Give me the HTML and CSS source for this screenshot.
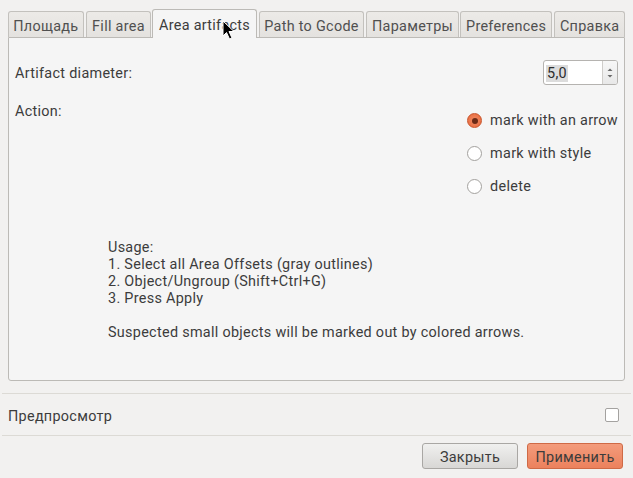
FILE: index.html
```html
<!DOCTYPE html>
<html>
<head>
<meta charset="utf-8">
<link rel="stylesheet" href="styles.css">
</head>
<body>
<div class="dialog">
  <div class="tabs">
    <div class="tab t1">Площадь</div>
    <div class="tab t2">Fill area</div>
    <div class="tab t3 active">Area artifacts</div>
    <div class="tab t4">Path to Gcode</div>
    <div class="tab t5">Параметры</div>
    <div class="tab t6">Preferences</div>
    <div class="tab t7">Справка</div>
  </div>
  <div class="panel">
    <div class="row-diam">
      <span class="label">Artifact diameter:</span>
      <div class="spin">
        <span class="spin-value"><span class="sel">5,0</span></span>
        <span class="spin-btns">
          <svg width="8" height="14" viewBox="0 0 8 14"><path d="M1.5 5 L4 2.5 L6.5 5 Z" fill="#6a6a6a"/><path d="M1.5 9 L4 11.5 L6.5 9 Z" fill="#6a6a6a"/></svg>
        </span>
      </div>
    </div>
    <div class="row-action">
      <span class="label">Action:</span>
      <div class="radios">
        <div class="radio-item"><span class="radio checked"><span class="dot"></span></span><span>mark with an arrow</span></div>
        <div class="radio-item"><span class="radio"></span><span>mark with style</span></div>
        <div class="radio-item"><span class="radio"></span><span>delete</span></div>
      </div>
    </div>
    <div class="usage">
      <div>Usage:</div>
      <div>1. Select all Area Offsets (gray outlines)</div>
      <div>2. Object/Ungroup (Shift+Ctrl+G)</div>
      <div>3. Press Apply</div>
      <div class="blank"></div>
      <div>Suspected small objects will be marked out by colored arrows.</div>
    </div>
  </div>
  <div class="sep"></div>
  <div class="preview-row">
    <span>Предпросмотр</span>
    <span class="checkbox"></span>
  </div>
  <div class="sep"></div>
  <div class="buttons">
    <button class="btn">Закрыть</button>
    <button class="btn apply">Применить</button>
  </div>
  <svg class="cursor" width="14" height="21" viewBox="0 0 14 21"><path d="M1 1 L1 16 L4.5 12.5 L7.5 19 L10 18 L7 11.5 L12 11.5 Z" fill="#000" stroke="#fff" stroke-width="1" stroke-linejoin="round"/></svg>
</div>
</body>
</html>
```
FILE: styles.css
```css
* { box-sizing: border-box; }
html, body { margin: 0; padding: 0; }
body {
  background: #f2f1f0;
  font-family: Roboto, "Open Sans", sans-serif;
  font-size: 14.4px;
  letter-spacing: 0.3px;
  color: #3c3c3c;
  width: 633px;
  height: 478px;
  overflow: hidden;
}
.dialog { position: relative; height: 478px; }
.tabs {
  display: flex;
  align-items: flex-end;
  gap: 2px;
  margin: 0 8px;
  padding-top: 10px;
  height: 38px;
  position: relative;
  z-index: 1;
}
.tab {
  height: 26px;
  padding-top: 3px;
  border: 1px solid #c3c1bd;
  border-bottom: none;
  border-radius: 3px 3px 0 0;
  background: linear-gradient(#eceae7, #e4e2df);
  color: #505050;
  display: flex;
  align-items: center;
  justify-content: center;
  white-space: nowrap;
  margin-bottom: 1px;
}
.tab.active {
  height: 29px;
  padding-top: 2px;
  background: #f5f5f5;
  color: #3c3c3c;
  margin-bottom: 0;
  border-color: #bcbab6;
}
.t1 { width: 76px; }
.t2 { width: 66px; margin-right: -1px; }
.t3 { width: 105px; }
.t4 { width: 106px; }
.t5 { width: 93px; margin-right: -1px; }
.t6 { width: 93px; }
.t7 { width: 71px; }
.panel {
  margin: -1px 8px 0 8px;
  height: 344px;
  border: 1px solid #bcbab6;
  border-radius: 0 0 3px 3px;
  background: #f5f5f5;
  padding: 22px 6px 0 6px;
}
.row-diam {
  display: flex;
  justify-content: space-between;
  align-items: center;
  height: 25px;
}
.row-diam .label { padding-top: 2px; }
.spin {
  width: 75px;
  height: 25px;
  border: 1px solid #b5b3b0;
  border-radius: 3px;
  background: #fff;
  display: flex;
  overflow: hidden;
}
.spin-value {
  flex: 1;
  display: flex;
  align-items: center;
  padding-left: 2px;
  padding-top: 1px;
}
.sel { background: #dcdcdc; padding: 0 1px; color: #2c2c2c; }
.spin-btns {
  width: 15px;
  border-left: 1px solid #cfcdca;
  background: linear-gradient(#f7f7f7, #e8e8e8);
  display: flex;
  align-items: center;
  justify-content: center;
}
.row-action {
  display: flex;
  justify-content: space-between;
  margin-top: 18px;
}
.row-action .label { line-height: 17px; }
.radios {
  display: flex;
  flex-direction: column;
  margin-top: 1px;
}
.radio-item {
  display: flex;
  align-items: center;
  height: 33px;
  gap: 8px;
}
.radio {
  width: 15px;
  height: 15px;
  border-radius: 50%;
  border: 1px solid #a3a19e;
  background: #fff;
  display: flex;
  align-items: center;
  justify-content: center;
  flex: none;
}
.radio.checked {
  background: radial-gradient(circle, #f08d66 0%, #e8673a 100%);
  border-color: #c8532a;
}
.dot {
  width: 6px;
  height: 6px;
  border-radius: 50%;
  background: #6b2a16;
}
.usage {
  margin-top: 36px;
  padding-left: 93px;
  line-height: 17px;
}
.blank { height: 17px; }
.sep {
  height: 1px;
  background: #dcdad5;
  margin: 12px 2px 0 2px;
}
.preview-row {
  display: flex;
  justify-content: space-between;
  align-items: center;
  height: 41px;
  padding: 0 14px 0 8px;
}
.preview-row > span:first-child { padding-top: 4px; }
.preview-row + .sep { margin-top: 0; }
.checkbox {
  width: 14px;
  height: 14px;
  border: 1px solid #a4a2a0;
  border-radius: 2px;
  background: #fff;
}
.buttons {
  display: flex;
  justify-content: flex-end;
  gap: 9px;
  padding: 7px 10px 0 0;
}
.btn {
  width: 96px;
  height: 26px;
  font: inherit;
  letter-spacing: inherit;
  color: #3c3c3c;
  border: 1px solid #a9a7a4;
  border-radius: 3px;
  background: linear-gradient(#f0f0ef, #d8d7d5);
  padding: 2px 0 0 0;
}
.btn.apply {
  border-color: #cf6a46;
  background: linear-gradient(#f39c7c, #ec815d);
}
.cursor {
  position: absolute;
  left: 222px;
  top: 20px;
  z-index: 5;
}
```
